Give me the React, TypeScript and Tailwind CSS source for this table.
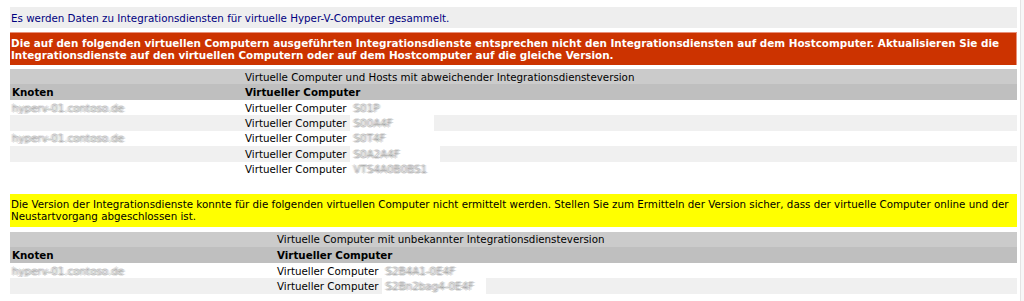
import React from "react"

const font = "font-['DejaVu_Sans',Verdana,sans-serif]"

type Row = { node?: string; vm: string; vmWidth: string }

const mismatched: Row[] = [
  { node: "hyperv-01.contoso.de", vm: "S01P", vmWidth: "w-[78px]" },
  { vm: "S00A4F", vmWidth: "w-[84px]" },
  { node: "hyperv-01.contoso.de", vm: "S0T4F", vmWidth: "w-[78px]" },
  { vm: "S0A2A4F", vmWidth: "w-[90px]" },
  { vm: "VTS4A0B0BS1", vmWidth: "w-[98px]" },
]

const unknown: Row[] = [
  { node: "hyperv-01.contoso.de", vm: "S2B4A1-0E4F", vmWidth: "w-[104px]" },
  { vm: "S2Bn2bag4-0E4F", vmWidth: "w-[104px]" },
]

// redacted names: smeared with offset shadows, no crisp glyphs
function Blurred({ text }: { text: string }) {
  return (
    <span className="inline-block text-transparent [text-shadow:1px_0_rgba(120,120,120,0.25),-1px_0_rgba(120,120,120,0.25),0_1px_rgba(120,120,120,0.22),0_-1px_rgba(120,120,120,0.22),2px_0_rgba(150,150,150,0.15),-2px_0_rgba(150,150,150,0.15)] select-none">
      {text}
    </span>
  )
}

function VmTable({ title, col, rows }: { title: string; col: string; rows: Row[] }) {
  return (
    <div className="flex flex-col">
      <div className={`grid ${col} h-[15px] items-center bg-[#cbcbcb] text-black`}>
        <div />
        <div>{title}</div>
      </div>
      <div className={`grid ${col} h-[16px] items-center bg-[#bfbfbf] font-bold text-black`}>
        <div className="pl-[2px]">Knoten</div>
        <div>Virtueller Computer</div>
      </div>
      {rows.map((r, i) => (
        <div
          key={i}
          className={`grid ${col} h-[15.4px] items-center text-black ${i % 2 === 1 ? "bg-[#f0f0f0]" : "bg-white"}`}
        >
          <div className="pl-[2px] overflow-hidden whitespace-nowrap">{r.node && <Blurred text={r.node} />}</div>
          <div className="flex items-center h-full whitespace-nowrap">
            <span>Virtueller Computer</span>
            <span className={`ml-[3px] ${r.vmWidth} h-full bg-white flex items-center overflow-hidden pl-[4px]`}>
              <Blurred text={r.vm} />
            </span>
          </div>
        </div>
      ))}
    </div>
  )
}

export default function App() {
  return (
    <div className={`${font} text-[10.3px] leading-[12px] bg-white h-[301px] overflow-hidden flex`}>
      <div className="flex-1 pl-[10px] pr-[3px] pt-[7px] flex flex-col">
        <div className="h-[21px] bg-[#eeeeee] text-[#000080] flex items-center pl-[1px]">
          Es werden Daten zu Integrationsdiensten für virtuelle Hyper-V-Computer gesammelt.
        </div>

        <div className="mt-[4px] h-[33px] bg-[#cc3300] border-t border-r border-[#e8907a] text-white text-[10.4px] font-bold pl-[1px] pt-[4px]">
          Die auf den folgenden virtuellen Computern ausgeführten Integrationsdienste entsprechen nicht den Integrationsdiensten auf dem Hostcomputer. Aktualisieren Sie die Integrationsdienste auf den virtuellen Computern oder auf dem Hostcomputer auf die gleiche Version.
        </div>

        <div className="mt-[4px]">
          <VmTable
            title="Virtuelle Computer und Hosts mit abweichender Integrationsdiensteversion"
            col="grid-cols-[235px_1fr]"
            rows={mismatched}
          />
        </div>

        <div className="mt-[17px] h-[33px] bg-[#ffff00] text-black pl-[1px] pr-[2px] pt-[4px]">
          Die Version der Integrationsdienste konnte für die folgenden virtuellen Computer nicht ermittelt werden. Stellen Sie zum Ermitteln der Version sicher, dass der virtuelle Computer online und der Neustartvorgang abgeschlossen ist.
        </div>

        <div className="mt-[5px]">
          <VmTable
            title="Virtuelle Computer mit unbekannter Integrationsdiensteversion"
            col="grid-cols-[267px_1fr]"
            rows={unknown}
          />
        </div>
      </div>
      <div className="w-[4px] border-l border-[#e4e4e4] bg-[#f7f7f7]" />
    </div>
  )
}
